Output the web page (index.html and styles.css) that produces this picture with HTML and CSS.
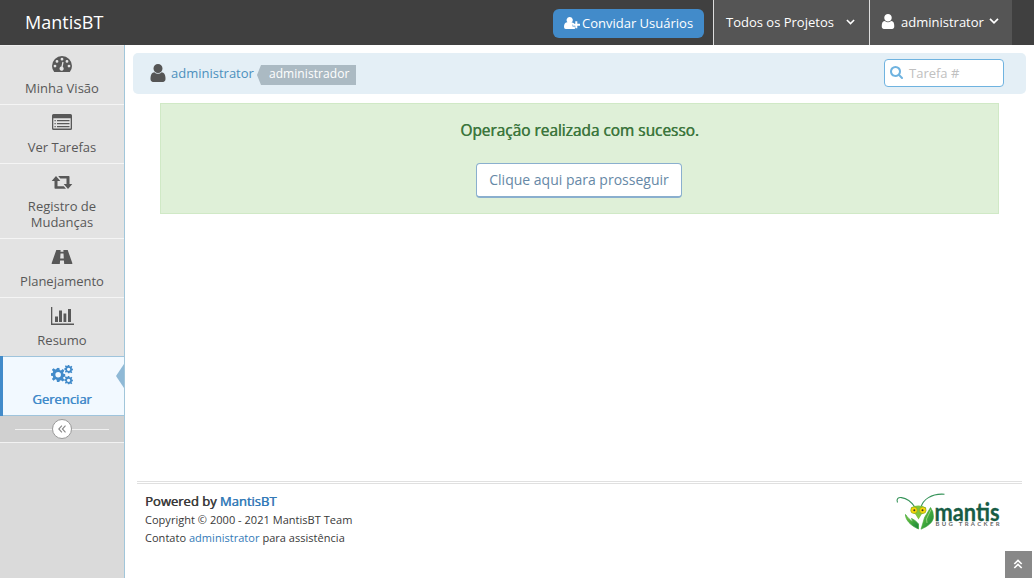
FILE: index.html
```html
<!DOCTYPE html>
<html lang="pt-BR">
<head>
<meta charset="utf-8">
<title>MantisBT</title>
<link rel="stylesheet" href="styles.css">
</head>
<body>
<svg class="defs" width="0" height="0">
  <symbol id="user" viewBox="256 128 1280 1536"><path d="M1536 1399q0 109-62.5 187t-150.5 78h-854q-88 0-150.5-78t-62.5-187q0-85 8.5-160.5t31.5-152 58.5-131 94-89 134.5-34.5q131 128 313 128t313-128q76 0 134.5 34.5t94 89 58.5 131 31.5 152 8.5 160.5zm-256-887q0 159-112.5 271.5t-271.5 112.5-271.5-112.5-112.5-271.5 112.5-271.5 271.5-112.5 271.5 112.5 112.5 271.5z"/></symbol>
  <symbol id="down" viewBox="0 0 10 6"><path d="M1 .8l4 4 4-4" fill="none" stroke="currentColor" stroke-width="1.7"/></symbol>
  <symbol id="gear" viewBox="-8 -8 16 16"><path fill-rule="evenodd" d="M-1.300-8h2.600l.5 2.500 1.300.5 2.100-1.500 1.800 1.800-1.500 2.100.5 1.300 2.500.5v2.600l-2.500.5-.5 1.300 1.500 2.100-1.800 1.800-2.100-1.500-1.300.5L1.300 8h-2.600l-.5-2.500-1.300-.5-2.100 1.500-1.800-1.800 1.500-2.100-.5-1.300-2.500-.5v-2.600l2.500-.5.5-1.300-1.500-2.100 1.800-1.800 2.100 1.500 1.300-.5zM0-3.100a3.100 3.100 0 1 0 0 6.200a3.100 3.100 0 1 0 0-6.200z"/></symbol>
</svg>
<header class="navbar">
  <a class="brand">MantisBT</a>
  <div class="nav-right">
    <a class="invite"><svg class="i-invite" viewBox="0 0 16 12"><path d="M5.600 0a3.100 3.100 0 0 1 1.900 5.600C9 5.200 10 6 10.200 7.400H8.500v2.200h2.400V12H1.800Q0 12 0 10C0 7.500.8 5.300 3 5.300h.5A3.100 3.100 0 0 1 5.600 0z"/><path d="M11.300 4.200h2v2.500H16v2h-2.700v2.500h-2V8.700H8.800v-2h2.500z"/></svg><span>Convidar Usuários</span></a>
    <a class="nav-item projects"><span>Todos os Projetos</span><svg class="i-down"><use href="#down"/></svg></a>
    <a class="nav-item account"><svg class="i-account"><use href="#user"/></svg><span>administrator</span><svg class="i-down big"><use href="#down"/></svg></a>
  </div>
</header>
<div class="main">
  <nav class="sidebar">
    <a class="item"><svg class="ico" viewBox="0 0 22 18"><path fill-rule="evenodd" d="M3.200 17Q1 14.400 1 11a10 10 0 0 1 20 0q0 3.400-2.200 6zM4 9.700a1.400 1.400 0 1 0 0 2.800 1.400 1.400 0 1 0 0-2.800zM6 5a1.400 1.400 0 1 0 0 2.800A1.400 1.400 0 1 0 6 5zM11 2.800a1.400 1.400 0 1 0 0 2.800 1.400 1.400 0 1 0 0-2.800zM16 5a1.400 1.400 0 1 0 0 2.800A1.400 1.400 0 1 0 16 5zM18 9.700a1.400 1.400 0 1 0 0 2.800 1.400 1.400 0 1 0 0-2.800zM11.400 6.800l-1 4.700a2.100 2.100 0 1 0 1.300.3l.9-4.600z"/></svg><span>Minha Visão</span></a>
    <a class="item"><svg class="ico" viewBox="0 0 22 18"><path fill-rule="evenodd" d="M2.500 0h17Q21 0 21 1.500v12.900q0 1.500-1.500 1.500h-17Q1 15.900 1 14.400v-12.900Q1 0 2.500 0zM2.300 4.300v9.900q0 .4.400.4h16.600q.4 0 .4-.4V4.300z"/><path d="M3.500 6h1.200v1.200H3.500zM6 6h12.500v1.200H6zM3.500 9h1.200v1.200H3.500zM6 9h12.500v1.200H6zM3.500 12h1.200v1.200H3.500zM6 12h12.500v1.200H6z"/></svg><span>Ver Tarefas</span></a>
    <a class="item"><svg class="ico" viewBox="0 0 22 18"><path d="M5 3l4.300 5H6.500v5.200h6.300l2.200 2.500H4.200q-.7 0-.7-.7V8H.7zM7.200 3h10.600q.7 0 .7.7V11h2.800L17 16l-4.300-5h2.800V5.500H9.300z"/></svg><span>Registro de<br>Mudanças</span></a>
    <a class="item"><svg class="ico" viewBox="0 0 22 18"><path fill-rule="evenodd" d="M5.300 2h4.300l-.1 1.800h3l-.1-1.800h4.300L21.300 15q.3 1-.8 1h-7.300l-.3-3.500H9.100L8.800 16H1.500q-1.100 0-.8-1zM9.500 5.500L9.200 10.500h3.600l-.3-5z"/></svg><span>Planejamento</span></a>
    <a class="item"><svg class="ico chart" viewBox="0 0 24 18"><path d="M1 0h1.300v16.500H24V18H1zM5 9.500h3v5.500H5zM9 3.500h3v11.500H9zM13.500 6.500h2.800v8.500h-2.800zM18 2h3v13h-3z"/></svg><span>Resumo</span></a>
    <a class="item active"><svg class="ico gears" viewBox="0 0 22 20"><use href="#gear" x="0" y="2.700" width="14.300" height="14.300"/><use href="#gear" x="13.300" y="0" width="8.600" height="8.600"/><use href="#gear" x="13.300" y="11" width="8.600" height="8.600"/></svg><span>Gerenciar</span></a>
    <div class="toggle"><span class="knob"><svg viewBox="0 0 10 10"><path d="M4.900 1.700L1.800 5l3.100 3.300M8.500 1.700L5.400 5l3.100 3.300"/></svg></span></div>
  </nav>
  <main class="content">
    <div class="crumbs">
      <svg class="i-user"><use href="#user"/></svg><a class="who">administrator</a><span class="label">administrador</span>
      <div class="search"><svg viewBox="64 128 1664 1664"><path d="M1216 832q0-185-131.500-316.500t-316.500-131.500-316.500 131.500-131.500 316.500 131.500 316.500 316.500 131.500 316.500-131.500 131.500-316.500zm512 832q0 52-38 90t-90 38q-54 0-90-38l-343-342q-179 124-399 124-143 0-273.500-55.500t-225-150-150-225-55.500-273.500 55.500-273.500 150-225 225-150 273.500-55.500 273.500 55.500 225 150 150 225 55.500 273.500q0 220-124 399l343 343q37 37 37 90z"/></svg><span>Tarefa #</span></div>
    </div>
    <section class="alert">
      <p>Operação realizada com sucesso.</p>
      <a class="btn">Clique aqui para prosseguir</a>
    </section>
    <footer class="footer">
      <div class="credits">
        <p class="powered">Powered by <a>MantisBT</a></p>
        <p>Copyright © 2000 - 2021 MantisBT Team</p>
        <p>Contato <a>administrator</a> para assistência</p>
      </div>
      <svg class="logo" viewBox="0 0 108 38">
        <defs><linearGradient id="leaf" x1="0" y1="0" x2="1" y2="1"><stop offset="0" stop-color="#8bcb3c"/><stop offset=".5" stop-color="#42aa3c"/><stop offset="1" stop-color="#16803c"/></linearGradient></defs>
        <path d="M1.500 9.500C0 5.500 2.500 4.200 5.500 4.600C12 5.500 15.500 9 19 14.200M25 14C27 7 35 .2 48.500 1.200" fill="none" stroke="#37945a" stroke-width="1.100"/>
        <path d="M9.500 21.500C9.500 27 14.500 32.500 22.500 36L22.500 31C20.500 28.500 18 26.500 15.500 25.500L17 29C14 27 11.500 24.500 9.500 21.500z" fill="url(#leaf)" stroke="#42a83c" stroke-width=".8"/>
        <path d="M34.500 14.500L28.500 24.500L25 36.200C31.500 33.500 37.500 29.500 37.500 23.500Q37.500 18 34.500 14.500z" fill="url(#leaf)" stroke="#42a83c" stroke-width=".6"/>
        <path d="M35 16.500L30.500 26L31 30" fill="none" stroke="#caeaa5" stroke-width=".6"/>
        <path d="M15 14.500Q22 10.500 30 14.500Q31 19 25.500 21.500L22.500 26.500L19.500 21.500Q14.500 19 15 14.500z" fill="#7fc53c"/>
        <circle cx="18" cy="17.200" r="3.300" fill="#f6d70a" stroke="#879f17" stroke-width=".6"/><circle cx="26.800" cy="17.200" r="3.300" fill="#f6d70a" stroke="#879f17" stroke-width=".6"/><circle cx="18.300" cy="17.300" r="1" fill="#333"/><circle cx="26.500" cy="17.300" r="1" fill="#333"/>
        <text class="logo-name" x="38.500" y="27.700" textLength="65" lengthAdjust="spacingAndGlyphs">mantis</text>
        <text class="logo-sub" x="39.500" y="33.300" textLength="64">BUG TRACKER</text>
      </svg>
    </footer>
  </main>
</div>
<a class="scroll-up"><svg viewBox="0 0 10 10"><path d="M1.300 5L5 1.500 8.700 5M1.300 9L5 5.500 8.700 9"/></svg></a>
</body>
</html>
```
FILE: styles.css
```css
* { box-sizing: border-box; }
body { margin: 0; height: 578px; overflow: hidden; display: flex; flex-direction: column; background: #fff; color: #393939; font: 13px/18px "Open Sans", sans-serif; }
p { margin: 0; }
svg { display: block; fill: currentColor; flex: none; }
.defs { position: absolute; }
a { color: #337ab7; white-space: nowrap; }
.navbar { height: 45px; flex: none; display: flex; justify-content: space-between; background: #404040; }
.navbar a { color: #fff; }
.brand { padding: 10px 0 0 25px; font-size: 18px; line-height: 25px; }
.nav-right { display: flex; padding-right: 22px; }
.invite { display: flex; align-items: center; width: 151px; height: 29px; margin: 9px 9px 0 0; padding: 0 10px 1px 11px; border-radius: 6px; background: #428bca; }
.i-invite { width: 16px; height: 12px; margin-right: 2px; }
.nav-item { display: flex; align-items: center; padding-bottom: 2px; border-left: 1px solid #ddd; background: #555; }
.projects { width: 156px; padding-left: 12px; }
.account { width: 143px; padding-left: 11px; }
.i-account { width: 14px; height: 15px; margin: 0 6px 1px 0; }
.i-down { width: 9px; height: 6px; margin-left: 12px; }
.i-down.big { width: 10px; margin: 0 0 1px 5px; }
.main { flex: 1; display: flex; }
.sidebar { width: 125px; background: #dadada; border-right: 1px solid #a1c6da; }
.item { display: flex; flex-direction: column; align-items: center; padding: 9px 0 8px; border-top: 1px solid #f5f5f5; background: #e3e3e3; color: #585858; text-align: center; line-height: 16px; }
.item:first-child { border-top-color: #eee; }
.ico { width: 22px; height: 18px; margin-bottom: 7px; }
.chart { width: 24px; }
.item.active { position: relative; height: 60px; padding: 8px 0 7px; border: solid #9fc4dc; border-width: 1px 0; background: #f2f9ff; color: #428bca; text-shadow: .5px 0 currentColor; }
.gears { height: 20px; margin-bottom: 6px; }
.active::before { content: ""; position: absolute; left: 0; top: -1px; width: 3px; height: 60px; background: #428bca; }
.active::after { content: ""; position: absolute; right: 0; top: 7px; border: solid transparent; border-width: 12px 8px 12px 0; border-right-color: #8fb9d6; }
.toggle { height: 27px; display: flex; justify-content: center; padding: 3px 15px; border-bottom: 1px solid #f2f2f2; background: linear-gradient(#f0f0f0, #f0f0f0) 15px 13px / 94px 1px no-repeat #d0d0d0; }
.knob { display: flex; align-items: center; justify-content: center; width: 20px; height: 20px; border: 1px solid #999; border-radius: 50%; background: #fff; color: #888; }
.knob svg { width: 10px; height: 10px; fill: none; stroke: currentColor; stroke-width: 1.1; }
.content { flex: 1; display: flex; flex-direction: column; padding: 8px 8px 0; }
.crumbs { display: flex; align-items: center; height: 41px; padding: 0 22px 1px 17px; border-radius: 5px; background: #e4eff6; }
.i-user { width: 16px; height: 18px; margin-right: 5px; color: #555; }
.who { color: #4c8fbd; }
.label { position: relative; height: 20px; margin: 4px 0 0 7px; padding: 0 6px 0 8px; background: #abbac3; color: #fff; font-size: 12px; line-height: 18px; letter-spacing: .08px; }
.label::before { content: ""; position: absolute; left: -4px; top: 0; border: solid transparent; border-width: 10px 4px 10px 0; border-right-color: #abbac3; }
.search { display: flex; align-items: center; width: 120px; height: 28px; margin-left: auto; padding-left: 5px; border: 1px solid #6fb3e0; border-radius: 4px; background: #fff; color: #c0c0c0; }
.search svg { width: 13px; height: 13px; margin: 0 6px 1px 0; color: #6fb3e0; }
.alert { display: flex; flex-direction: column; align-items: center; height: 111px; margin: 9px 27px 0; padding-top: 16px; border: 1px solid #d0e9c6; background: #dff0d8; color: #3c763d; }
.alert p { font-size: 15.4px; line-height: 22px; text-shadow: .5px 0 currentColor; }
.btn { width: 206px; text-align: center; height: 35px; margin: 21px 1px 0 0; border: 1px solid #8aafce; border-bottom-width: 2px; border-radius: 4px; background: #fff; color: #6688a6; font-size: 14px; line-height: 32px; }
.footer { display: flex; justify-content: space-between; height: 97px; margin: auto 4px 0; padding: 8px 18px 0 8px; border-top: 3px double #e0e0e0; }
.credits { font-size: 11px; letter-spacing: .03px; }
.credits .powered { margin-bottom: 1px; font-size: 13px; letter-spacing: 0; }
.powered, .powered a { text-shadow: .5px 0 currentColor; }
.logo { width: 108px; height: 38px; margin: 1px 0 0; overflow: visible; }
.logo-name { font: bold 25px Lato, sans-serif; fill: #175c45; stroke: #175c45; stroke-width: .3px; }
.logo-sub { font: bold 6px Lato, sans-serif; fill: #696969; }
.scroll-up { position: fixed; right: 2px; bottom: 0; width: 27px; height: 27px; padding: 8px; background: #888; color: #fff; }
.scroll-up svg { width: 10px; height: 10px; fill: none; stroke: currentColor; stroke-width: 1.7; }
```
